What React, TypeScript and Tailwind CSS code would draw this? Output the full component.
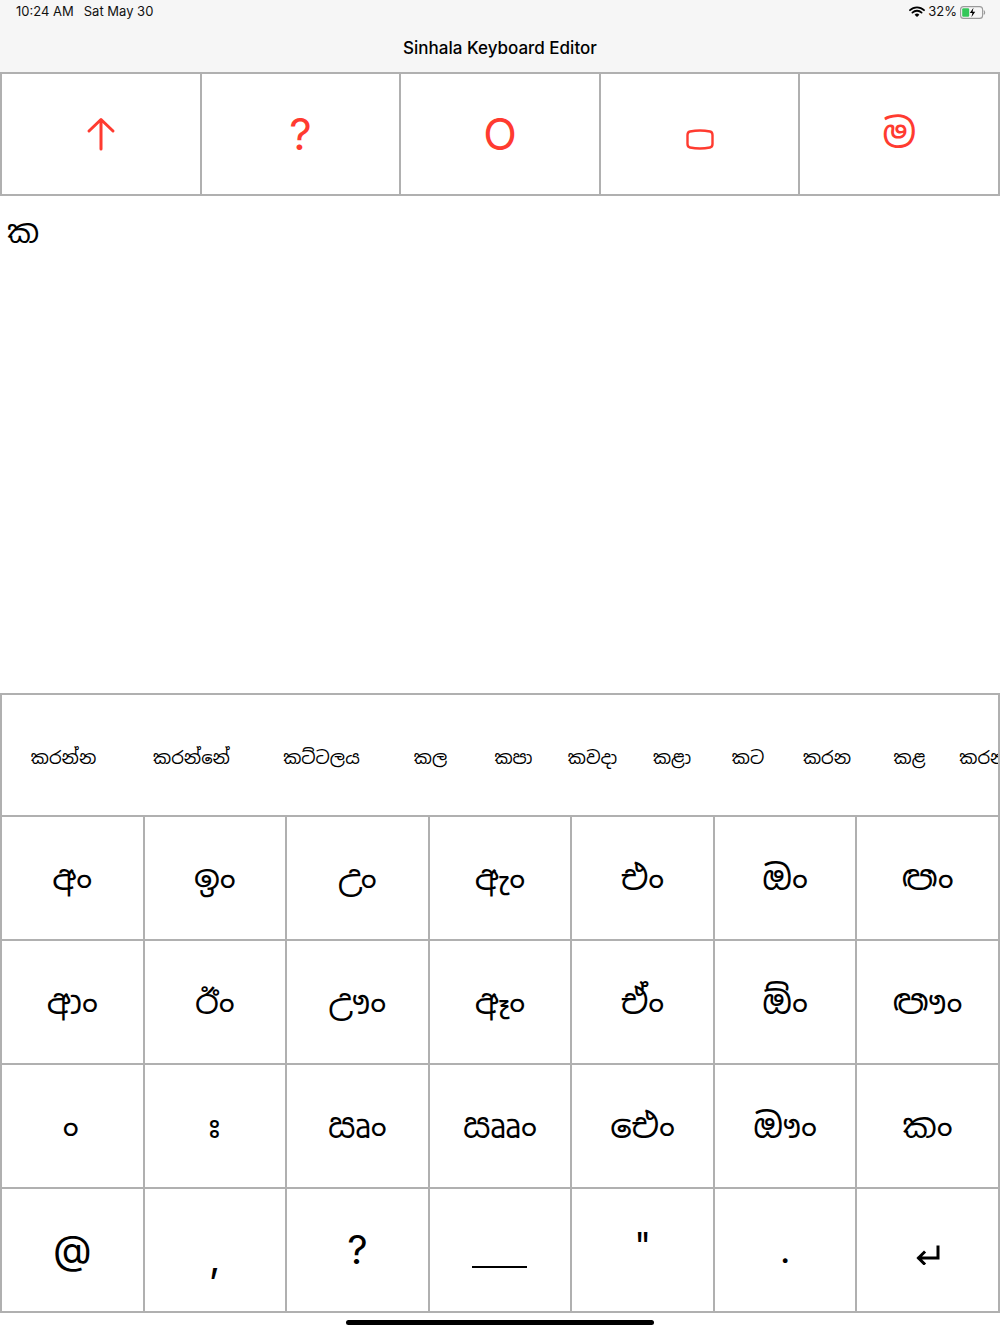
import React from "react";

const SIN = "font-['Noto_Sans_Sinhala','Noto_Sans',sans-serif]";
const UI = "font-['Inter','Liberation_Sans',sans-serif]";

const suggestions: { t: string; w: string }[] = [
  { t: "කරන්න", w: "w-[123px]" },
  { t: "කරන්නේ", w: "w-[133px]" },
  { t: "කට්ටලය", w: "w-[127px]" },
  { t: "කල", w: "w-[91px]" },
  { t: "කපා", w: "w-[75px]" },
  { t: "කවදා", w: "w-[83px]" },
  { t: "කළා", w: "w-[76px]" },
  { t: "කට", w: "w-[76px]" },
  { t: "කරන", w: "w-[82px]" },
  { t: "කළ", w: "w-[83px]" },
  { t: "කරන්න", w: "w-[82px]" },
];

const rows: { t: string; c?: string }[][] = [
  [{ t: "අං" }, { t: "ඉං" }, { t: "උං" }, { t: "ඇං" }, { t: "එං" }, { t: "ඔං" }, { t: "ඏං" }],
  [{ t: "ආං" }, { t: "ඊං" }, { t: "ඌං" }, { t: "ඈං" }, { t: "ඒං" }, { t: "ඕං" }, { t: "ඐං" }],
  [
    { t: "\u00A0ං", c: "pr-[20px]" },
    { t: "\u00A0ඃ", c: "pr-[18px]" },
    { t: "ඍං" },
    { t: "ඎං" },
    { t: "ඓං" },
    { t: "ඖං" },
    { t: "කං" },
  ],
];

function Wifi() {
  return (
    <svg width="16" height="12" viewBox="0 0 16 12">
      <path d="M1 4.2 A10 10 0 0 1 15 4.2" stroke="#000" strokeWidth="1.8" fill="none" strokeLinecap="round" />
      <path d="M3.4 6.6 A6.6 6.6 0 0 1 12.6 6.6" stroke="#000" strokeWidth="1.8" fill="none" strokeLinecap="round" />
      <path d="M8 11 L5.6 8.8 A3.4 3.4 0 0 1 10.4 8.8 Z" fill="#000" />
    </svg>
  );
}

function Battery() {
  return (
    <svg width="26" height="13" viewBox="0 0 26 13">
      <rect x="0.6" y="0.6" width="22" height="11.8" rx="3" stroke="#9a9a9a" strokeWidth="1.1" fill="none" />
      <rect x="2.2" y="2.2" width="7" height="8.6" rx="1.2" fill="#34c759" />
      <path d="M23.8 4.5 Q25.4 6.5 23.8 8.5" stroke="#9a9a9a" strokeWidth="1.2" fill="none" />
      <path d="M13.5 1.8 L9.8 7 L12.4 7 L11.4 11.2 L15.2 5.8 L12.6 5.8 Z" fill="#000" />
    </svg>
  );
}

const cell = "h-[124px] border-r-2 border-b-2 border-[#b0b0b0] flex items-center justify-center text-black";
const tool = "border-r-2 border-b-2 border-[#b0b0b0] flex items-center justify-center";

export default function App() {
  return (
    <div className="w-[1000px] h-[1334px] flex flex-col bg-white overflow-hidden font-['Liberation_Sans',Arial,sans-serif]">
      {/* header */}
      <div className={`bg-[#f6f6f6] h-[72px] flex flex-col shrink-0 ${UI}`}>
        <div className="h-[24px] flex items-center justify-between pl-[16px] pr-[14px] text-[13px] text-[#111]">
          <div className="flex gap-[10px]">
            <span>10:24 AM</span>
            <span>Sat May 30</span>
          </div>
          <div className="flex items-center gap-[3px]">
            <Wifi />
            <span>32%</span>
            <Battery />
          </div>
        </div>
        <div className="flex-1 flex items-center justify-center text-[17px] font-medium text-black pt-[2px]">
          Sinhala Keyboard Editor
        </div>
      </div>

      {/* toolbar */}
      <div className="h-[124px] shrink-0 grid grid-cols-5 border-t-2 border-l-2 border-[#b0b0b0]">
        <div className={tool}>
          <svg width="30" height="34" viewBox="0 0 30 34">
            <path d="M15 32 V3 M3 14 L15 2.5 L27 14" stroke="#ff3b30" strokeWidth="3" fill="none" strokeLinecap="round" strokeLinejoin="round" />
          </svg>
        </div>
        <div className={`${tool} text-[#ff3b30] text-[44px] leading-none ${UI}`}>?</div>
        <div className={`${tool} text-[#ff3b30] text-[44px] leading-none ${UI}`}>O</div>
        <div className={`${tool} pt-[10px]`}>
          <svg width="28" height="21" viewBox="0 0 28 21">
            <path d="M4 2.5 Q14 0.5 24 2.5 Q26.5 3 26.5 6 V15 Q26.5 18 24 18.5 Q14 20.5 4 18.5 Q1.5 18 1.5 15 V6 Q1.5 3 4 2.5 Z" stroke="#ff3b30" strokeWidth="2.4" fill="none" />
          </svg>
        </div>
        <div className={`${tool} text-[#ff3b30] text-[40px] leading-none ${SIN}`}>ම</div>
      </div>

      {/* text area */}
      <div className="h-[497px] shrink-0 px-[7px] pt-[16px]">
        <div className={`text-[32px] leading-[40px] text-black ${SIN}`}>ක</div>
      </div>

      {/* suggestions */}
      <div className="h-[124px] shrink-0 border-2 border-[#b0b0b0] flex items-center overflow-hidden whitespace-nowrap">
        {suggestions.map((s, i) => (
          <div key={i} className={`${s.w} shrink-0 flex justify-center text-[18px] text-black pt-[4px] ${SIN}`}>
            {s.t}
          </div>
        ))}
      </div>

      {/* keys */}
      <div className="shrink-0 grid grid-cols-7 border-l-2 border-[#b0b0b0]">
        {rows.flat().map((k, i) => (
          <div key={i} className={`${cell} text-[34px] ${SIN} ${k.c ?? ""}`}>
            {k.t}
          </div>
        ))}
        <div className={`${cell} text-[40px] ${UI}`}>@</div>
        <div className={`${cell} text-[40px] pt-[16px] ${UI}`}>,</div>
        <div className={`${cell} text-[40px] ${UI}`}>?</div>
        <div className={cell}>
          <div className="w-[55px] h-[2.5px] bg-black mt-[34px]" />
        </div>
        <div className={`${cell} text-[36px] pb-[10px] ${UI}`}>"</div>
        <div className={`${cell} text-[36px] ${UI}`}>.</div>
        <div className={`${cell} pt-[10px]`}>
          <svg width="26" height="20" viewBox="0 0 26 20">
            <path d="M23 2 V13 H4 M9 7.5 L3.5 13 L9 18.5" stroke="#000" strokeWidth="3" fill="none" strokeLinecap="square" />
          </svg>
        </div>
      </div>

      {/* home indicator */}
      <div className="h-[21px] shrink-0 flex items-start justify-center pt-[7px]">
        <div className="w-[308px] h-[5px] rounded-full bg-black" />
      </div>
    </div>
  );
}
